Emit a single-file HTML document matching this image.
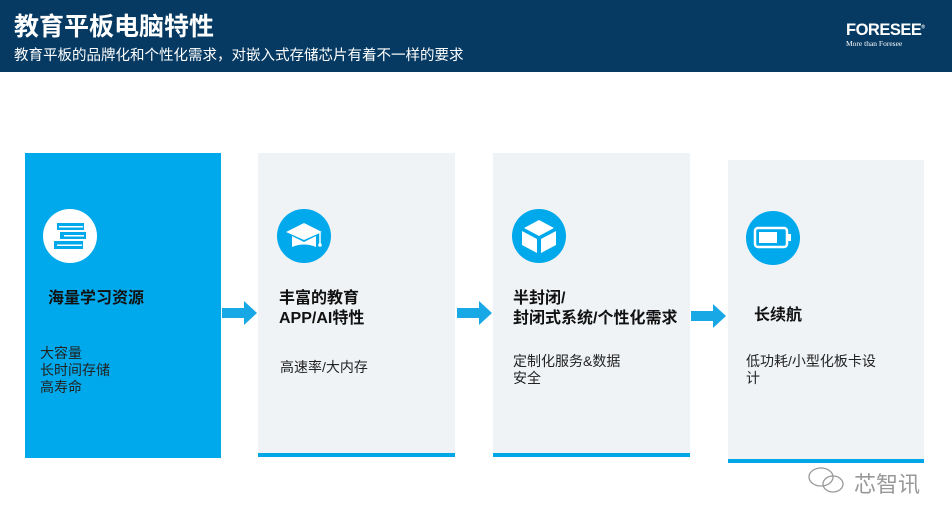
<!DOCTYPE html><html><head><meta charset="utf-8"><style>
body{margin:0;width:952px;height:523px;background:#fff;position:relative;overflow:hidden;font-family:"Liberation Sans","Noto Sans CJK SC",sans-serif}
.hd{position:absolute;left:0;top:0;width:952px;height:72px;background:#063a62}
.t1{position:absolute;left:14px;top:7px;color:#fff;font-size:25px;font-weight:bold}
.t2{position:absolute;left:14px;top:44px;color:#fff;font-size:14.5px}
.logo{position:absolute;left:846px;top:21px;color:#fff;font-weight:bold;font-size:16.5px;letter-spacing:-0.5px}
.logo2{position:absolute;left:846px;top:39px;color:#fff;font-size:7.5px;font-family:"Liberation Serif",serif}
.c{position:absolute;background:#f0f3f6;border-bottom:4px solid #00a6e6}
.ic{position:absolute;width:54px;height:54px;border-radius:50%}
.b{position:absolute;font-weight:bold;font-size:16px;color:#111;line-height:20px}
.s{position:absolute;font-size:14px;color:#222;line-height:17px}
.ar{position:absolute}
</style></head><body>
<div class="hd"><div class="t1">教育平板电脑特性</div><div class="t2">教育平板的品牌化和个性化需求，对嵌入式存储芯片有着不一样的要求</div>
<div class="logo">FORESEE<sup style="font-size:5px">®</sup></div><div class="logo2">More than Foresee</div></div>

<div class="c" style="left:25px;top:153px;width:196px;height:305px;background:#00a9eb;border:none"></div>
<div class="c" style="left:258px;top:153px;width:197px;height:300px"></div>
<div class="c" style="left:493px;top:153px;width:197px;height:300px"></div>
<div class="c" style="left:728px;top:160px;width:196px;height:299px"></div>

<div class="ic" style="left:43px;top:209px;background:#fff">
<svg width="54" height="54"><g fill="#00a9eb"><path d="M14 14H41V21H14Z"/><path d="M17 23H43V30H17Z"/><path d="M11 32H40V40H11Z"/></g><g fill="#fff"><rect x="16" y="17" width="24" height="1.5"/><rect x="21" y="26" width="20" height="1.5"/><rect x="14" y="35.5" width="25" height="1.5"/></g></svg></div>
<div class="ic" style="left:277px;top:209px;background:#00a9eb">
<svg width="54" height="54"><path d="M27 14 L45 23 L27 31 L9 23Z" fill="#fff"/><path d="M15 27 V38 Q27 33 39 38 V27 L27 33Z" fill="#fff"/><path d="M43 24 V35" stroke="#fff" stroke-width="1.5"/><circle cx="43" cy="36" r="1.8" fill="#fff"/></svg></div>
<div class="ic" style="left:512px;top:209px;background:#00a9eb">
<svg width="54" height="54"><path d="M27 11 L42 19 L27 27 L12 19Z" fill="#fff"/><path d="M10 22 L25 30 V44 L10 36Z" fill="#fff"/><path d="M44 22 L29 30 V44 L44 36Z" fill="#fff"/></svg></div>
<div class="ic" style="left:746px;top:211px;background:#00a9eb">
<svg width="54" height="54"><rect x="9" y="17" width="32" height="19" rx="3" fill="none" stroke="#fff" stroke-width="2.5"/><rect x="13" y="21" width="18" height="11" fill="#fff"/><rect x="42" y="23" width="3" height="7" fill="#fff"/></svg></div>

<div class="b" style="left:48px;top:289px">海量学习资源</div>
<div class="s" style="left:40px;top:345px">大容量<br>长时间存储<br>高寿命</div>
<div class="b" style="left:279px;top:289px">丰富的教育<br>APP/AI特性</div>
<div class="s" style="left:280px;top:359px">高速率/大内存</div>
<div class="b" style="left:513px;top:289px">半封闭/<br>封闭式系统/个性化需求</div>
<div class="s" style="left:513px;top:353px">定制化服务&amp;数据<br>安全</div>
<div class="b" style="left:754px;top:306px">长续航</div>
<div class="s" style="left:746px;top:353px">低功耗/小型化板卡设<br>计</div>

<svg class="ar" style="left:222px;top:301px" width="36" height="24"><path d="M0 7H22V0L35 12L22 24V17H0Z" fill="#18a8e6"/></svg>
<svg class="ar" style="left:457px;top:301px" width="36" height="24"><path d="M0 7H22V0L35 12L22 24V17H0Z" fill="#18a8e6"/></svg>
<svg class="ar" style="left:691px;top:304px" width="36" height="24"><path d="M0 7H22V0L35 12L22 24V17H0Z" fill="#18a8e6"/></svg>

<svg class="ar" style="left:806px;top:465px" width="42" height="30"><g fill="none" stroke="#999" stroke-width="1.3"><ellipse cx="15" cy="12" rx="12" ry="9"/><ellipse cx="27" cy="19" rx="10" ry="8"/></g></svg>
<div style="position:absolute;left:854px;top:467px;font-size:22px;color:#999">芯智讯</div>
</body></html>
